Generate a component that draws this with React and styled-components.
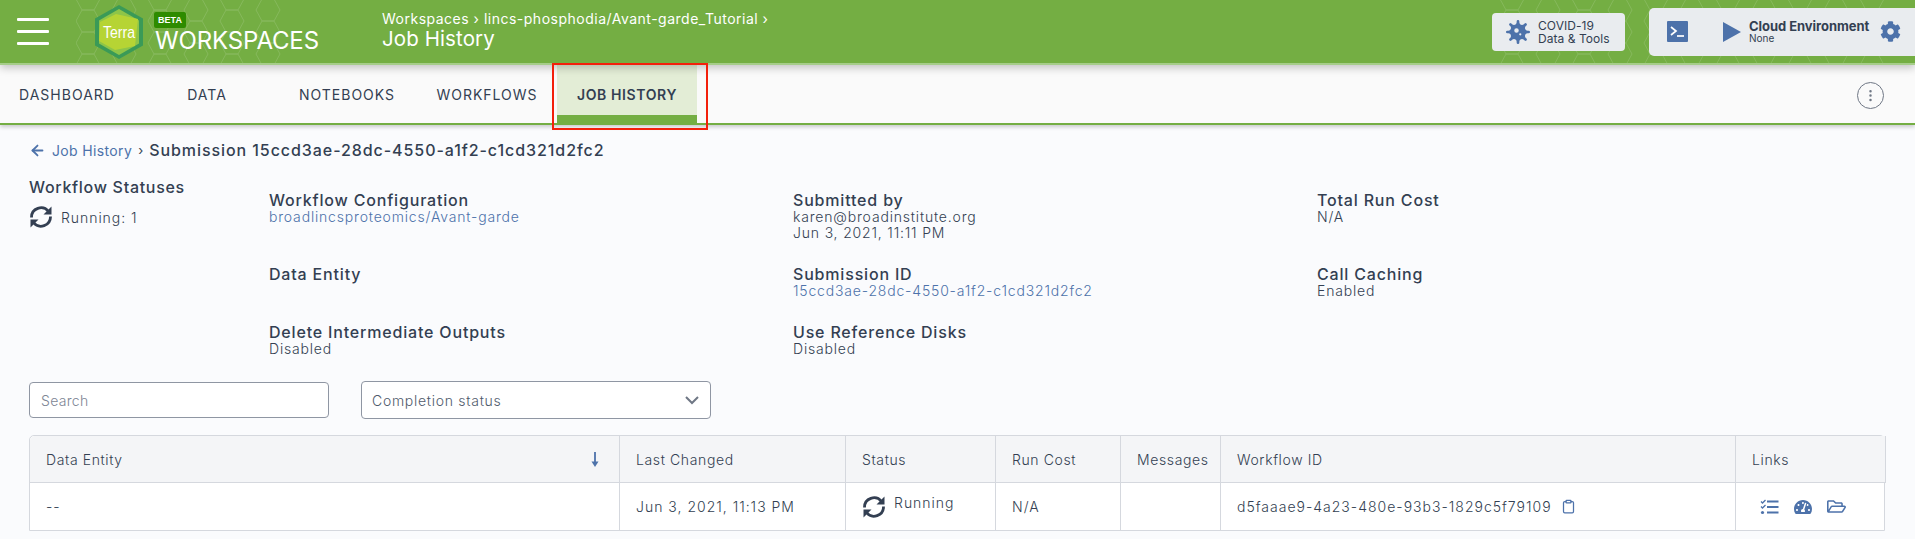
import styled, { createGlobalStyle } from 'styled-components';
import { ArrowLeft, Clipboard, EllipsisVertical } from 'lucide-react';
import { FaCog, FaRegFolderOpen, FaTachometerAlt, FaVirus } from 'react-icons/fa';

const GlobalStyle = createGlobalStyle`
  html, body {
    margin: 0;
    height: 100%;
    overflow: hidden;
    background: #fafbfd;
  }
  body {
    font-family: 'Inter', 'Liberation Sans', sans-serif;
    color: #333f52;
  }
  * { box-sizing: border-box; }
`;

const Page = styled.div`
  position: relative;
  width: 1915px;
  height: 539px;
  overflow: hidden;
`;

const TopBar = styled.header`
  position: relative;
  display: flex;
  align-items: center;
  height: 65px;
  background: #74ae43;
  border-bottom: 2px solid #a6cd8a;
  box-shadow: 0 3px 8px rgba(0, 0, 0, 0.22);
  z-index: 2;
`;

const Hexes = styled.svg`
  position: absolute;
  top: 0;
  left: ${(p) => p.$left}px;
  opacity: 0.13;
`;

const Burger = styled.div`
  display: flex;
  flex-direction: column;
  gap: 9px;
  width: 32px;
  margin-left: 17px;
  span {
    height: 3px;
    background: #fff;
    border-radius: 1px;
  }
`;

const Logo = styled.svg`
  position: relative;
  margin-left: 45px;
  flex: none;
`;

const Brand = styled.div`
  position: relative;
  display: flex;
  flex-direction: column;
  align-items: flex-start;
  margin-left: 11px;
  width: 227px;
  padding-top: 2px;
`;

const Beta = styled.span`
  background: #2e8b00;
  color: #fff;
  font: 700 9px 'Liberation Sans', sans-serif;
  line-height: 16px;
  width: 32px;
  text-align: center;
  border-radius: 2px;
  margin-left: -1px;
`;

const BrandName = styled.div`
  color: #fff;
  font-size: 24px;
  font-weight: 400;
  line-height: 26px;
  letter-spacing: -0.15px;
`;

const Crumbs = styled.div`
  color: #fff;
  display: flex;
  flex-direction: column;
  margin-top: -3px;
`;

const CrumbLine = styled.div`
  font-size: 14px;
  line-height: 18px;
  letter-spacing: 0.5px;
`;

const CrumbTitle = styled.div`
  font-size: 20.5px;
  line-height: 22px;
  letter-spacing: 0.1px;
`;

const Actions = styled.div`
  position: relative;
  display: flex;
  align-items: center;
  gap: 24px;
  margin-left: auto;
`;

const CovidButton = styled.div`
  display: flex;
  align-items: center;
  gap: 8px;
  width: 133px;
  height: 38px;
  padding-left: 14px;
  background: #e9ecef;
  border-radius: 4px;
  font-size: 12px;
  line-height: 13px;
  letter-spacing: 0.05px;
  color: #333f52;
  svg { color: #4d72aa; flex: none; }
`;

const CloudPanel = styled.div`
  display: flex;
  align-items: center;
  width: 266px;
  height: 48px;
  padding-left: 18px;
  background: #e9ecef;
  border-radius: 5px 0 0 5px;
  svg { color: #4d72aa; flex: none; }
`;

const CloudText = styled.div`
  margin-left: 8px;
  width: 131px;
  strong {
    display: block;
    font-size: 13px;
    font-weight: 700;
    line-height: 13px;
    letter-spacing: -0.05px;
  }
  span {
    display: block;
    font-size: 10px;
    line-height: 11px;
  }
`;

const PlayIcon = styled.svg`
  margin-left: 35px;
`;

const TabBar = styled.nav`
  display: flex;
  align-items: stretch;
  height: 60px;
  background: #fafafa;
  border-bottom: 2px solid #74ae43;
  box-shadow: 0 2px 4px rgba(0, 0, 0, 0.2);
  padding-right: 31px;
  position: relative;
  z-index: 1;
`;

const Tab = styled.div`
  display: flex;
  align-items: center;
  justify-content: center;
  width: 140px;
  font-size: 14px;
  letter-spacing: ${(p) => (p.$active ? '0.6px' : '1px')};
  font-weight: ${(p) => (p.$active ? 600 : 400)};
  color: #333f52;
  background: ${(p) => (p.$active ? '#e3edd6' : 'transparent')};
  border-bottom: 8px solid ${(p) => (p.$active ? '#74ae43' : 'transparent')};
  padding-top: 8px;
  &:first-child { margin-left: -3px; }
`;

const MenuDots = styled.div`
  display: flex;
  align-items: center;
  justify-content: center;
  align-self: center;
  width: 27px;
  height: 27px;
  margin-left: auto;
  margin-top: 2px;
  border: 1.5px solid #6f7785;
  border-radius: 50%;
  color: #6f7785;
`;

const Highlight = styled.div`
  position: absolute;
  left: 552px;
  top: 63px;
  width: 156px;
  height: 67px;
  border: 2px solid #f3200b;
  z-index: 3;
`;

const Main = styled.main`
  padding: 15px 30px 0 29px;
`;

const Trail = styled.div`
  display: flex;
  align-items: center;
  height: 20px;
  font-size: 14px;
  svg { color: #4d72aa; margin-right: 6px; }
`;

const TrailLink = styled.span`
  color: #4d72aa;
  letter-spacing: 0.35px;
`;

const TrailSep = styled.span`
  margin: 0 6px;
  color: #333f52;
  font-size: 13px;
`;

const TrailTitle = styled.span`
  font-size: 16px;
  font-weight: 500;
  letter-spacing: 0.93px;
`;

const Summary = styled.section`
  display: grid;
  grid-template-columns: 240px 524px 524px 1fr;
  height: 203px;
  margin-top: 18px;
`;

const Statuses = styled.div`
  display: flex;
  flex-direction: column;
`;

const StatusTitle = styled.div`
  font-size: 16px;
  font-weight: 500;
  line-height: 18px;
  letter-spacing: 0.7px;
`;

const StatusLine = styled.div`
  display: flex;
  align-items: center;
  gap: 8px;
  margin-top: 9px;
  font-size: 14px;
  font-weight: 300;
  letter-spacing: 0.95px;
  svg { color: #333f52; flex: none; }
`;

const Facts = styled.div`
  display: flex;
  flex-direction: column;
  gap: 24px;
  padding-top: 13px;
  grid-column: ${(p) => p.$col};
`;

const FactGroup = styled.div`
  min-height: ${(p) => p.$min || 34}px;
`;

const FactLabel = styled.div`
  font-size: 16px;
  font-weight: 500;
  line-height: 18px;
  letter-spacing: 0.82px;
`;

const FactValue = styled.div`
  font-size: 14px;
  font-weight: 300;
  line-height: 16px;
  letter-spacing: 0.82px;
  color: ${(p) => (p.$link ? '#4d72aa' : '#333f52')};
`;

const Filters = styled.div`
  display: flex;
  align-items: center;
  gap: 32px;
  height: 38px;
`;

const SearchBox = styled.div`
  display: flex;
  align-items: center;
  width: 300px;
  height: 36px;
  padding-left: 11px;
  background: #fff;
  border: 1px solid #8f96a3;
  border-radius: 4px;
  font-size: 14px;
  font-weight: 300;
  letter-spacing: 0.3px;
  color: #7d8594;
`;

const SelectBox = styled.div`
  display: flex;
  align-items: center;
  justify-content: space-between;
  width: 350px;
  height: 38px;
  padding: 0 11px 0 10px;
  background: #fff;
  border: 1px solid #8f96a3;
  border-radius: 4px;
  font-size: 14px;
  font-weight: 300;
  letter-spacing: 0.72px;
  color: #4f5a6b;
`;

const Table = styled.div`
  display: grid;
  grid-template-columns: 590px 226px 150px 125px 100px 515px 150px;
  width: 1856px;
  margin-top: 16px;
  border: 1px solid #d5d8de;
  border-radius: 5px 5px 0 0;
  background: #fff;
`;

const HeadCell = styled.div`
  display: flex;
  align-items: center;
  justify-content: space-between;
  height: 47px;
  padding: 0 20px 0 16px;
  background: #f4f5f7;
  border-right: 1px solid #d5d8de;
  border-bottom: 1px solid #d5d8de;
  font-size: 14px;
  font-weight: 300;
  letter-spacing: 0.62px;
  color: #333f52;
  &:first-child { border-top-left-radius: 5px; }
  &:last-child { border-right: 0; border-top-right-radius: 5px; }
`;

const BodyCell = styled.div`
  display: flex;
  align-items: center;
  gap: 8px;
  height: 47px;
  padding: 0 16px;
  border-right: 1px solid #d5d8de;
  font-size: 14px;
  font-weight: 300;
  letter-spacing: 1px;
  color: #333f52;
  &:last-child { border-right: 0; }
`;

const RunningLabel = styled.span`
  margin-bottom: 8px;
`;

const CopyIcon = styled(Clipboard)`
  color: #4d72aa;
  margin-left: 1px;
`;

const LinkIcons = styled.div`
  display: flex;
  align-items: center;
  gap: 15px;
  margin-left: 8px;
  color: #4d72aa;
`;

const HEX = 'M12 0 L24 0 L30 11 L24 22 L12 22 L6 11 Z';

const HexPattern = ({ left, cols, rows }) => (
  <Hexes $left={left} width={cols * 36} height={63} fill="none" stroke="#fff" strokeWidth="1">
    {Array.from({ length: cols * rows }, (_, i) => {
      const c = i % cols;
      const r = Math.floor(i / cols);
      return <path key={i} d={HEX} transform={`translate(${c * 36 - 6} ${r * 22 - 12 + (c % 2) * 11})`} />;
    })}
  </Hexes>
);

const SyncIcon = ({ size }) => (
  <svg width={size} height={size} viewBox="0 0 24 24" fill="none" stroke="#333f52" strokeWidth="2.8">
    <path d="M2.500 12.500a9.500 9.500 0 0 1 17-6" />
    <path d="M21.500 11.500a9.500 9.500 0 0 1-17 6" />
    <path d="M22.500 1.500v8h-8z" fill="#333f52" stroke="none" />
    <path d="M1.500 22.500v-8h8z" fill="#333f52" stroke="none" />
  </svg>
);

const TerminalIcon = () => (
  <svg width="21" height="21" viewBox="0 0 21 21">
    <rect width="21" height="21" rx="1" fill="#4d72aa" />
    <path d="M4 6l5 4-5 4" fill="none" stroke="#fff" strokeWidth="1.7" />
    <path d="M10 15h7" stroke="#fff" strokeWidth="1.7" />
  </svg>
);

const TasksIcon = () => (
  <svg width="19" height="16" viewBox="0 0 19 16" fill="none" stroke="#4d72aa">
    <path d="M1 2.500l1.500 1.500 3-3M1 7.500l1.500 1.500 3-3" strokeWidth="1.3" />
    <circle cx="2.500" cy="13.500" r="1.600" fill="#4d72aa" stroke="none" />
    <path d="M7 2.500h11.500M7 8h11.500M7 13.500h11.500" strokeWidth="2" />
  </svg>
);

const SortArrow = () => (
  <svg width="8" height="15" viewBox="0 0 8 15">
    <path d="M4 0v12" stroke="#4d72aa" strokeWidth="1.8" />
    <path d="M0.500 9.500h7L4 15z" fill="#4d72aa" />
  </svg>
);

const TerraLogo = () => (
  <Logo width="50" height="54" viewBox="0 0 50 54">
    <path d="M25 0L49 13.500V40.500L25 54L1 40.500V13.500Z" fill="#3a9a57" />
    <path d="M25 4L45 15.500V38.500L25 50L5 38.500V15.500Z" fill="#8ec548" />
    <path d="M22 9L44 14L41 41L21 45L5 36L6 17Z" fill="#b6d434" />
    <text x="25" y="33" textAnchor="middle" fill="#fff" fontFamily="'Liberation Sans', sans-serif" fontSize="17" textLength="32" lengthAdjust="spacingAndGlyphs">Terra</text>
  </Logo>
);

const summaryColumns = [
  [
    { label: 'Workflow Configuration', values: ['broadlincsproteomics/Avant-garde'], link: true, min: 50 },
    { label: 'Data Entity', values: [] },
    { label: 'Delete Intermediate Outputs', values: ['Disabled'] },
  ],
  [
    { label: 'Submitted by', values: ['karen@broadinstitute.org', 'Jun 3, 2021, 11:11 PM'], min: 50 },
    { label: 'Submission ID', values: ['15ccd3ae-28dc-4550-a1f2-c1cd321d2fc2'], link: true },
    { label: 'Use Reference Disks', values: ['Disabled'] },
  ],
  [
    { label: 'Total Run Cost', values: ['N/A'], min: 50 },
    { label: 'Call Caching', values: ['Enabled'] },
  ],
];

const tabs = ['DASHBOARD', 'DATA', 'NOTEBOOKS', 'WORKFLOWS', 'JOB HISTORY'];
const columns = ['Data Entity', 'Last Changed', 'Status', 'Run Cost', 'Messages', 'Workflow ID', 'Links'];

export default function App() {
  return (
    <Page>
      <GlobalStyle />
      <TopBar>
        <HexPattern left={76} cols={6} rows={4} />
        <HexPattern left={1500} cols={11} rows={4} />
        <Burger>
          <span />
          <span />
          <span />
        </Burger>
        <TerraLogo />
        <Brand>
          <Beta>BETA</Beta>
          <BrandName>WORKSPACES</BrandName>
        </Brand>
        <Crumbs>
          <CrumbLine>Workspaces › lincs-phosphodia/Avant-garde_Tutorial ›</CrumbLine>
          <CrumbTitle>Job History</CrumbTitle>
        </Crumbs>
        <Actions>
          <CovidButton>
            <FaVirus size={24} />
            <span>
              COVID-19
              <br />
              Data &amp; Tools
            </span>
          </CovidButton>
          <CloudPanel>
            <TerminalIcon />
            <PlayIcon width="18" height="20" viewBox="0 0 18 20">
              <path d="M0 0L18 10L0 20Z" fill="#4d72aa" />
            </PlayIcon>
            <CloudText>
              <strong>Cloud Environment</strong>
              <span>None</span>
            </CloudText>
            <FaCog size={21} />
          </CloudPanel>
        </Actions>
      </TopBar>
      <TabBar>
        {tabs.map((t) => (
          <Tab key={t} $active={t === 'JOB HISTORY'}>
            {t}
          </Tab>
        ))}
        <MenuDots>
          <EllipsisVertical size={15} />
        </MenuDots>
      </TabBar>
      <Highlight />
      <Main>
        <Trail>
          <ArrowLeft size={17} strokeWidth={2.6} />
          <TrailLink>Job History</TrailLink>
          <TrailSep>›</TrailSep>
          <TrailTitle>Submission 15ccd3ae-28dc-4550-a1f2-c1cd321d2fc2</TrailTitle>
        </Trail>
        <Summary>
          <Statuses>
            <StatusTitle>Workflow Statuses</StatusTitle>
            <StatusLine>
              <SyncIcon size={24} />
              Running: 1
            </StatusLine>
          </Statuses>
          {summaryColumns.map((col, i) => (
            <Facts key={i} $col={i + 2}>
              {col.map((f) => (
                <FactGroup key={f.label} $min={f.min}>
                  <FactLabel>{f.label}</FactLabel>
                  {f.values.map((v) => (
                    <FactValue key={v} $link={f.link}>
                      {v}
                    </FactValue>
                  ))}
                </FactGroup>
              ))}
            </Facts>
          ))}
        </Summary>
        <Filters>
          <SearchBox>Search</SearchBox>
          <SelectBox>
            Completion status
            <svg width="14" height="9" viewBox="0 0 14 9" fill="none" stroke="#6f7785" strokeWidth="2">
              <path d="M1 1l6 6 6-6" />
            </svg>
          </SelectBox>
        </Filters>
        <Table>
          {columns.map((c, i) => (
            <HeadCell key={c}>
              {c}
              {i === 0 && <SortArrow />}
            </HeadCell>
          ))}
          <BodyCell>--</BodyCell>
          <BodyCell>Jun 3, 2021, 11:13 PM</BodyCell>
          <BodyCell>
            <SyncIcon size={24} />
            <RunningLabel>Running</RunningLabel>
          </BodyCell>
          <BodyCell>N/A</BodyCell>
          <BodyCell />
          <BodyCell>
            d5faaae9-4a23-480e-93b3-1829c5f79109
            <CopyIcon size={15} />
          </BodyCell>
          <BodyCell>
            <LinkIcons>
              <TasksIcon />
              <FaTachometerAlt size={18} />
              <FaRegFolderOpen size={19} />
            </LinkIcons>
          </BodyCell>
        </Table>
      </Main>
    </Page>
  );
}
